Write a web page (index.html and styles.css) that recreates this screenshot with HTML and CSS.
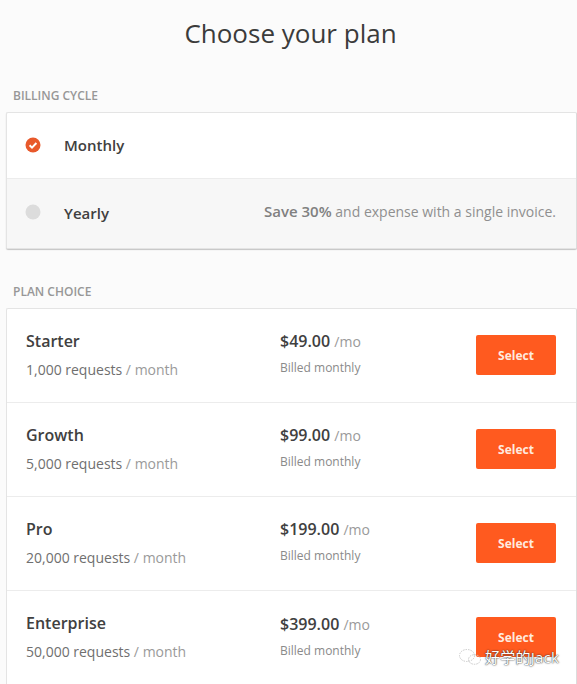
FILE: index.html
```html
<!DOCTYPE html>
<html lang="en">
<head>
<meta charset="utf-8">
<title>Choose your plan</title>
<link rel="stylesheet" href="styles.css">
</head>
<body>
<main class="page">
  <h1 class="title">Choose your plan</h1>
  <section class="group billing">
    <h2 class="label">BILLING CYCLE</h2>
    <div class="card card-billing">
      <div class="cycle">
        <svg class="radio" viewBox="0 0 16 16" width="16" height="16" aria-hidden="true"><circle cx="8" cy="8" r="7.5" fill="#e8592b"/><path d="M4.6 8.2l2.4 2.4 4.4-4.6" fill="none" stroke="#fff" stroke-width="2"/></svg>
        <span class="cycle-name">Monthly</span>
      </div>
      <div class="cycle cycle-alt">
        <svg class="radio" viewBox="0 0 16 16" width="16" height="16" aria-hidden="true"><circle cx="8" cy="8" r="7.5" fill="#dcdcdc"/></svg>
        <span class="cycle-name">Yearly</span>
        <span class="cycle-note"><b>Save 30%</b> and expense with a single invoice.</span>
      </div>
    </div>
  </section>
  <section class="group">
    <h2 class="label">PLAN CHOICE</h2>
    <div class="card">
      <div class="plan">
        <div class="plan-info"><div class="plan-name">Starter</div><div class="plan-req">1,000 requests <span class="muted">/ month</span></div></div>
        <div class="plan-price"><div class="price">$49.00 <span class="muted">/mo</span></div><div class="billed">Billed monthly</div></div>
        <button class="select">Select</button>
      </div>
      <div class="plan">
        <div class="plan-info"><div class="plan-name">Growth</div><div class="plan-req">5,000 requests <span class="muted">/ month</span></div></div>
        <div class="plan-price"><div class="price">$99.00 <span class="muted">/mo</span></div><div class="billed">Billed monthly</div></div>
        <button class="select">Select</button>
      </div>
      <div class="plan">
        <div class="plan-info"><div class="plan-name">Pro</div><div class="plan-req">20,000 requests <span class="muted">/ month</span></div></div>
        <div class="plan-price"><div class="price">$199.00 <span class="muted">/mo</span></div><div class="billed">Billed monthly</div></div>
        <button class="select">Select</button>
      </div>
      <div class="plan">
        <div class="plan-info"><div class="plan-name">Enterprise</div><div class="plan-req">50,000 requests <span class="muted">/ month</span></div></div>
        <div class="plan-price"><div class="price">$399.00 <span class="muted">/mo</span></div><div class="billed">Billed monthly</div></div>
        <button class="select">Select</button>
      </div>
    </div>
  </section>
</main>
<div class="watermark">
  <svg viewBox="0 0 26 18" width="26" height="18" aria-hidden="true"><g fill="none" stroke="#c9c9c9" stroke-width="1" stroke-dasharray="1.5 1"><ellipse cx="10" cy="7.5" rx="7.5" ry="6"/><ellipse cx="17.5" cy="11.5" rx="6" ry="4.8"/></g></svg>
  <span>好学的Jack</span>
</div>
</body>
</html>
```
FILE: styles.css
```css
* { box-sizing: border-box; }
html, body { margin: 0; height: 684px; overflow: hidden; }
body {
  position: relative;
  background: #fbfbfb;
  color: #3a3a3a;
  font-family: "Open Sans", "Noto Sans CJK SC", sans-serif;
}
.page { padding-left: 6px; }
.title {
  margin: 0;
  padding: 15px 2px 0 0;
  height: 88px;
  text-align: center;
  font-size: 26px;
  line-height: 36px;
  font-weight: 400;
  color: #3b3b3b;
}
.group { display: flex; flex-direction: column; }
.billing { height: 196px; }
.label {
  margin: 0;
  padding-left: 7px;
  height: 24px;
  font-size: 12px;
  line-height: 16px;
  font-weight: 600;
  color: #979797;
}
.card {
  background: #fff;
  border: 1px solid #e4e4e4;
  border-right-color: #dcdcdc;
  border-radius: 2px;
}
.card-billing {
  box-shadow: 0 1px 1px #c4c4c4;
}
.cycle {
  display: flex;
  align-items: center;
  height: 66px;
  padding: 0 20px 0 18px;
  border-bottom: 1px solid #ececec;
}
.cycle-alt {
  height: 69px;
  background: #f7f7f7;
  border-bottom: 0;
}
.radio { flex: none; margin: -2px 23px 0 0; }
.cycle-name { margin-top: -2px; font-size: 15px; font-weight: 550; color: #404040; }
.cycle-alt .radio { margin-top: -3px; }
.cycle-alt .cycle-name { margin-top: -1px; }
.cycle-note { margin: -5px 0 0 auto; font-size: 14px; color: #8f8f8f; }
.cycle-note b { font-size: 15px; font-weight: 600; color: #808080; }
.plan {
  display: flex;
  align-items: center;
  height: 94px;
  padding: 0 20px 2px 19px;
  border-bottom: 1px solid #ececec;
}
.plan:last-child { border-bottom: 0; }
.plan-info { width: 254px; margin-top: -1px; }
.plan-name { font-size: 16px; line-height: 22px; font-weight: 550; color: #404040; }
.plan-req { margin-top: 8px; font-size: 14px; line-height: 19px; color: #6f6f6f; }
.muted { color: #9a9a9a; font-weight: 400; }
.plan-price { flex: 1; margin-top: -3px; }
.price { font-size: 16px; line-height: 22px; font-weight: 550; color: #404040; }
.price .muted { font-size: 14px; }
.billed { margin-top: 6px; font-size: 12px; line-height: 17px; color: #8a8a8a; }
.select {
  width: 80px;
  height: 40px;
  padding: 1px 0 0;
  border: 0;
  border-radius: 2px;
  background: #ff5a1f;
  color: #ffeadf;
  font-family: inherit;
  font-size: 12px;
  font-weight: 700;
}
.watermark {
  position: absolute;
  left: 457px;
  top: 648px;
  display: flex;
  align-items: center;
  gap: 2px;
  color: #fff;
  font-size: 15px;
  letter-spacing: 0.25px;
  line-height: 18px;
  text-shadow: 0 0 1px #333, 0 0 2px rgba(40,40,40,.8);
}
```
